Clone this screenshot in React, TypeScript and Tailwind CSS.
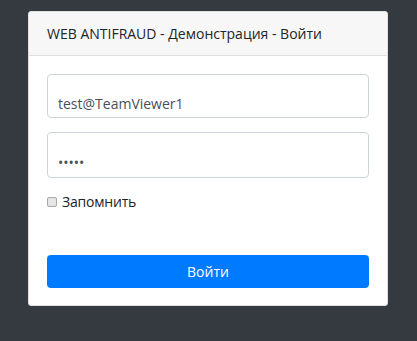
import { useState } from 'react'

export default function App() {
  const [login, setLogin] = useState('test@TeamViewer1')
  const [password, setPassword] = useState('12345')
  const [remember, setRemember] = useState(false)

  return (
    <div
      className="min-h-[341px] bg-[#343a40] pt-[11px] px-[28px] text-[#212529]"
      style={{ fontFamily: '"Open Sans", "Noto Sans", sans-serif' }}
    >
      <div className="w-[360px] bg-white border border-[#dfdfdf] rounded-[3px] overflow-hidden">
        <div className="h-[44px] bg-[#f7f7f7] border-b border-[#dfdfdf] px-[18px] flex items-center text-[14px]">
          WEB ANTIFRAUD - Демонстрация - Войти
        </div>

        <form
          className="px-[18px] pt-[18px] pb-[17px] flex flex-col"
          onSubmit={(e) => e.preventDefault()}
        >
          <input
            type="text"
            value={login}
            onChange={(e) => setLogin(e.target.value)}
            className="h-[44px] w-full border border-[#ced4da] rounded-[4px] px-[10px] pt-[18px] pb-[4px] text-[14px] leading-[20px] text-[#495057] outline-none"
          />
          <input
            type="password"
            value={password}
            onChange={(e) => setPassword(e.target.value)}
            className="mt-[14px] h-[46px] w-full border border-[#ced4da] rounded-[4px] px-[10px] pt-[18px] pb-[4px] text-[14px] leading-[20px] text-[#495057] outline-none"
          />

          <label className="mt-[13px] flex items-center gap-[5px] text-[14px] tracking-[-0.2px] cursor-pointer">
            <span
              onClick={() => setRemember(!remember)}
              className={`w-[10px] h-[10px] rounded-[2px] border border-[#a8a8a8] ${
                remember ? 'bg-[#007bff]' : 'bg-[#e6e6e6]'
              }`}
            />
            Запомнить
          </label>

          <button
            type="submit"
            className="mt-[43px] h-[33px] w-full bg-[#007bff] text-white rounded-[4px] text-[14px]"
          >
            Войти
          </button>
        </form>
      </div>
    </div>
  )
}
